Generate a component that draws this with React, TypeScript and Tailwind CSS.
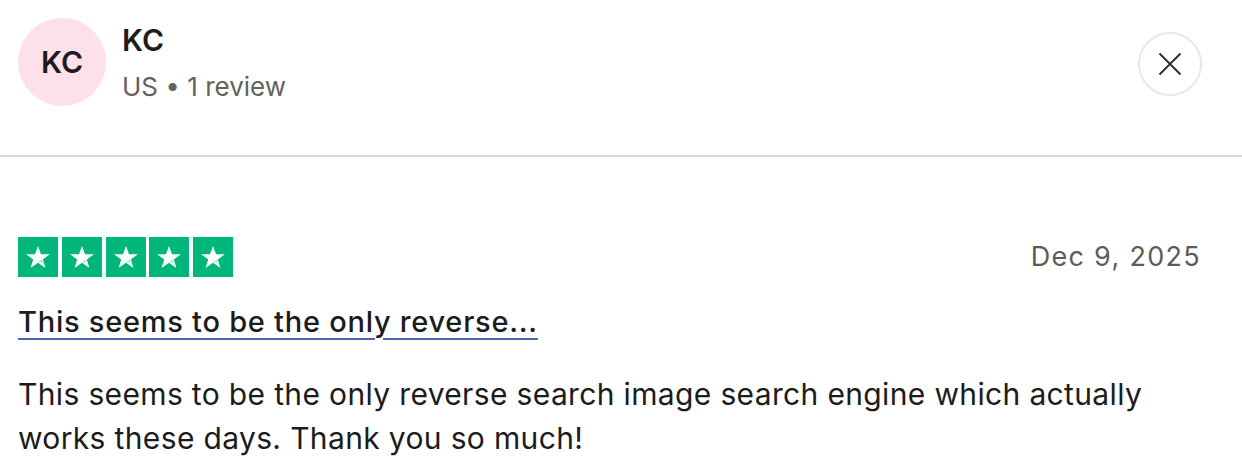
import React from "react";

function Star() {
  return (
    <div className="w-10 h-10 bg-[#00b67a] flex items-center justify-center">
      <svg width="28" height="28" viewBox="0 0 24 24">
        <path
          d="M12 2.5l2.6 7.2h7.6l-6.1 4.5 2.3 7.3L12 17l-6.4 4.5 2.3-7.3-6.1-4.5h7.6z"
          fill="#ffffff"
        />
        <path d="M15.3 13.9l0.8 2.6L12 17z" fill="#00b67a" opacity="0.35" />
      </svg>
    </div>
  );
}

export default function App() {
  return (
    <div
      className="w-[1242px] h-[474px] bg-white overflow-hidden text-[#1c1c1c]"
      style={{ fontFamily: "Inter, 'Noto Sans', sans-serif" }}
    >
      <div className="h-[157px] border-b-2 border-[#dcd9d3] pl-[18px] pr-[40px] pt-[18px] flex items-start">
        <div className="w-[88px] h-[88px] rounded-full bg-[#fde0ea] flex items-center justify-center text-[30px] font-semibold">
          KC
        </div>
        <div className="ml-4 flex flex-col">
          <div className="text-[30px] leading-[40px] font-semibold mt-[2px]">KC</div>
          <div className="text-[26px] leading-[40px] text-[#64625d] mt-[7px] tracking-[0px]">US • 1 review</div>
        </div>
        <div className="ml-auto mt-[14px] w-16 h-16 rounded-full border-2 border-[#e8e8e8] flex items-center justify-center">
          <svg width="24" height="24" viewBox="0 0 24 24">
            <path d="M1.5 1.5L22.5 22.5M22.5 1.5L1.5 22.5" stroke="#2a2a2a" strokeWidth="1.8" />
          </svg>
        </div>
      </div>
      <div className="pl-[18px] pr-[41px] pt-[80px]">
        <div className="flex items-center justify-between">
          <div className="flex gap-[3.75px]">
            <Star />
            <Star />
            <Star />
            <Star />
            <Star />
          </div>
          <div className="text-[27px] text-[#5e5c57] tracking-[1.3px]">Dec 9, 2025</div>
        </div>
        <div className="mt-[24px] text-[29px] leading-[40px] font-medium tracking-[0.75px]">
          <span className="underline decoration-[#4a64b8] decoration-[1.5px] underline-offset-[6px]">
            This seems to be the only reverse...
          </span>
        </div>
        <div className="mt-[30px] text-[30px] leading-[44px] tracking-[0.35px]">
          This seems to be the only reverse search image search engine which actually works these days. Thank you so much!
        </div>
      </div>
    </div>
  );
}
